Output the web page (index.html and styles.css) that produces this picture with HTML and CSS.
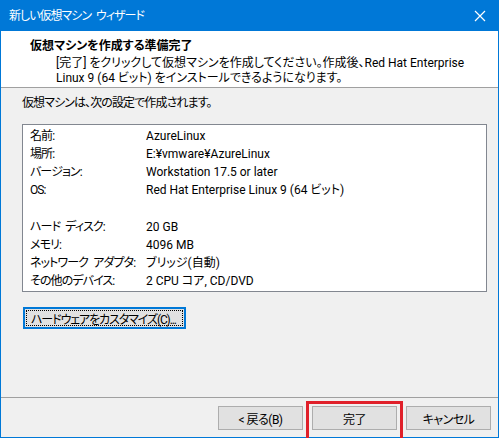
FILE: index.html
```html
<!DOCTYPE html>
<html lang="ja">
<head>
<meta charset="utf-8">
<title>新しい仮想マシン ウィザード</title>
<link rel="stylesheet" href="styles.css">
</head>
<body>
<div class="window">
  <div class="titlebar">
    <span class="title">新しい仮想マシン ウィザード</span>
    <svg class="close" width="12" height="12" viewBox="0 0 12 12"><path d="M1 1 L11 11 M11 1 L1 11" stroke="#fff" stroke-width="1.2" fill="none"/></svg>
  </div>
  <div class="header">
    <div class="h-title">仮想マシンを作成する準備完了</div>
    <div class="h-desc">
      <div class="line">[完了] をクリックして仮想マシンを作成してください。作成後、Red Hat Enterprise</div>
      <div class="line">Linux 9 (64 ビット) をインストールできるようになります。</div>
    </div>
  </div>
  <div class="content">
    <p class="intro">仮想マシンは、次の設定で作成されます。</p>
    <div class="summary">
      <span class="k">名前:</span><span class="v">AzureLinux</span>
      <span class="k">場所:</span><span class="v">E:¥vmware¥AzureLinux</span>
      <span class="k">バージョン:</span><span class="v">Workstation 17.5 or later</span>
      <span class="k">OS:</span><span class="v">Red Hat Enterprise Linux 9 (64 ビット)</span>
      <span class="k blank"></span><span class="v blank"></span>
      <span class="k">ハード ディスク:</span><span class="v">20 GB</span>
      <span class="k">メモリ:</span><span class="v">4096 MB</span>
      <span class="k">ネットワーク アダプタ:</span><span class="v">ブリッジ(自動)</span>
      <span class="k">その他のデバイス:</span><span class="v">2 CPU コア, CD/DVD</span>
    </div>
    <button class="btn btn-focus"><span class="focus-rect">ハードウェアをカスタマイズ(C)...</span></button>
  </div>
  <div class="footer">
    <button class="btn btn-nav">&lt; 戻る(B)</button>
    <div class="marked">
      <button class="btn btn-nav">完了</button>
      <span class="redbox"></span>
    </div>
    <button class="btn btn-nav">キャンセル</button>
  </div>
</div>
</body>
</html>
```

FILE: styles.css
```css
* { box-sizing: border-box; }
html, body { margin: 0; padding: 0; }
body {
  font-family: Roboto, "Noto Sans CJK JP", sans-serif;
  font-size: 12px;
  color: #000;
  font-feature-settings: "palt";
  background: #fff;
}
.window {
  width: 499px;
  height: 438px;
  border: 1px solid #0078d7;
  display: flex;
  flex-direction: column;
  background: #f0f0f0;
}
.titlebar {
  height: 30px;
  flex: none;
  background: #0078d7;
  color: #fff;
  display: flex;
  align-items: center;
  justify-content: space-between;
  padding: 0 12px 0 8px;
}
.title { line-height: 30px; letter-spacing: -1px; word-spacing: 3px; }
.close { display: block; }
.header {
  height: 57px;
  flex: none;
  background: #fff;
  border-bottom: 1px solid #a0a0a0;
  padding: 7px 0 0 29px;
}
.h-title { font-weight: bold; line-height: 16px; }
.h-desc { margin: 2px 0 0 26px; }
.line { line-height: 15px; white-space: nowrap; }
.content {
  flex: 1;
  padding: 8px 11px 0 21px;
}
.intro { margin: 0; line-height: 15px; letter-spacing: -0.9px; }
.summary {
  margin-top: 13px;
  background: #fff;
  border: 1px solid #828790;
  display: grid;
  grid-template-columns: 116px 1fr;
  padding: 2px 7px 1px;
  line-height: 18px;
  height: 168px;
}
.k { letter-spacing: -0.9px; word-spacing: 3px; white-space: nowrap; }
.blank { height: 18px; }
.btn {
  font: inherit;
  font-feature-settings: "palt";
  color: #000;
  background: #e1e1e1;
  border: 1px solid #adadad;
  padding: 0;
  margin: 0;
  white-space: nowrap;
}
.btn-focus {
  margin: 15px 0 0 1px;
  width: 163px;
  height: 22px;
  border: 2px solid #0078d7;
  padding: 1px;
  display: block;
}
.focus-rect {
  display: flex;
  align-items: center;
  height: 100%;
  border: 1px dotted #000;
  padding-left: 4px;
  letter-spacing: -1.1px;
}
.footer {
  height: 40px;
  flex: none;
  border-top: 1px solid #a0a0a0;
  display: flex;
  justify-content: flex-end;
  gap: 9px;
  padding: 8px 7px 0 0;
}
.btn-nav { width: 85px; height: 24px; display: block; letter-spacing: -0.5px; }
.marked { position: relative; }
.redbox {
  position: absolute;
  inset: -5px -6px;
  border: 3px solid #e0202a;
  pointer-events: none;
}
```
